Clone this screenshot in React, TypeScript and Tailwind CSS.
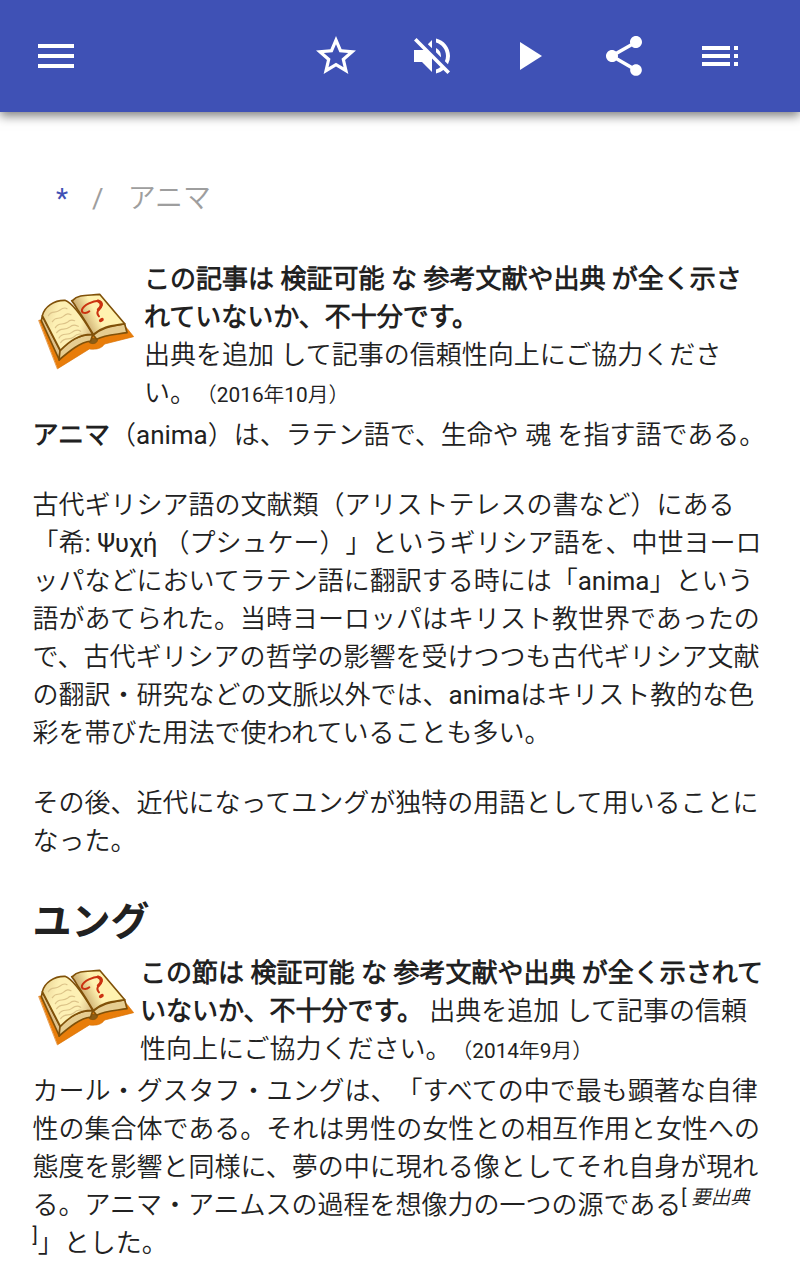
import type { ReactNode } from 'react';
import { MdMenu, MdPlayArrow, MdShare, MdStarBorder, MdToc, MdVolumeOff } from 'react-icons/md';

const actions = [
    { label: 'お気に入り', Icon: MdStarBorder },
    { label: 'ミュート', Icon: MdVolumeOff },
    { label: '再生', Icon: MdPlayArrow },
    { label: '共有', Icon: MdShare },
    { label: '目次', Icon: MdToc },
];

function BookIcon({ className }: { className: string }) {
    return (
        <svg viewBox="0 0 330 300" className={`h-[100px] w-[110px] shrink-0 ${className}`} fill="none" strokeLinejoin="round" strokeLinecap="round">
            <defs>
                <linearGradient id="leftPage" x1="40" y1="110" x2="185" y2="150" gradientUnits="userSpaceOnUse">
                    <stop offset="0" stopColor="#ecd89a" />
                    <stop offset="0.25" stopColor="#fdf0b4" />
                    <stop offset="0.75" stopColor="#fdf0b4" />
                    <stop offset="1" stopColor="#dcc088" />
                </linearGradient>
                <linearGradient id="rightPage" x1="156" y1="120" x2="198" y2="98" gradientUnits="userSpaceOnUse">
                    <stop offset="0" stopColor="#c9a86c" />
                    <stop offset="1" stopColor="#fff2b0" />
                </linearGradient>
            </defs>

            {/* Couverture */}
            <path d="M27 121L38 119L88 220L140 175L190 155L284 140L291 145L311 170L224 192C213 206 201 209 178 207L83 266Z" fill="#e87d0a" stroke="#d97306" strokeWidth="2" />
            <path d="M178 180C187 172 201 174 203 180C201 191 188 194 178 188Z" fill="#8b5d16" stroke="#805109" strokeWidth="2" />

            {/* Tranche */}
            <path d="M37 108L34 122L88 240L90 211Z" fill="#dfc28b" stroke="#805109" strokeWidth="5" />
            <path d="M90 211C119 181 147 162 188 164L182 183C150 187 120 212 87 240Z" fill="#e6cd91" stroke="#805109" strokeWidth="5" />
            <path d="M190 165C220 139 251 139 284 131L291 158C256 164 225 164 200 178Z" fill="#e6cd91" stroke="#805109" strokeWidth="5" />

            {/* Pages */}
            <path d="M37 107C43 81 72 60 105 61C126 68 157 111 188 163C148 162 119 183 91 211Z" fill="url(#leftPage)" stroke="#805109" strokeWidth="5" />
            <path d="M128 61C145 42 177 47 209 43L284 131C250 137 219 137 190 163C177 142 161 115 144 91C138 80 132 70 125 62Z" fill="url(#rightPage)" stroke="#805109" strokeWidth="5" />
            <path d="M55 107C65 89 75 102 89 91C99 83 104 81 111 86M67 125C78 107 86 121 100 109C111 99 116 101 123 104M76 143C87 124 98 138 112 127C120 118 127 119 134 122M80 158C92 140 104 153 118 142C130 132 136 135 145 139M87 174C98 155 111 169 126 157C138 148 145 149 152 154M92 188C105 168 116 183 131 171C139 163 146 160 155 163" stroke="#dcc389" strokeWidth="3.5" />

            {/* Point d'interrogation */}
            <path d="M178 94C168 102 153 100 156 89C161 74 190 63 206 62C222 68 215 80 207 88C200 95 202 103 207 109" stroke="#cb3210" strokeWidth="6" />
            <path d="M204 63C219 70 214 80 205 89" stroke="#cb3210" strokeWidth="9" />
            <ellipse cx="214" cy="120" rx="8" ry="5.5" transform="rotate(-30 214 120)" fill="#cb3210" />
        </svg>
    );
}

function Notice({ children, iconClass, className }: { children: ReactNode; iconClass: string; className: string }) {
    return (
        <div className="-ml-[2.5px] flex items-start">
            <BookIcon className={iconClass} />
            <p className={className}>{children}</p>
        </div>
    );
}

export default function App() {
    return (
        <div
            className="h-[1280px] w-[800px] overflow-hidden bg-white font-[Roboto,'Noto_Sans_CJK_JP_DemiLight','Noto_Sans_CJK_JP',sans-serif] text-[#212121] [text-spacing-trim:space-all]"
            lang="ja"
        >
            <header className="flex h-28 items-center justify-between bg-[#3f51b5] pr-14 pl-8 text-white shadow-[0_4px_10px_rgba(0,0,0,0.5)]">
                <button type="button" aria-label="メニュー">
                    <MdMenu className="size-12" />
                </button>
                <div className="flex gap-12">
                    {actions.map(({ label, Icon }) => (
                        <button key={label} type="button" aria-label={label}>
                            <Icon className="size-12" />
                        </button>
                    ))}
                </div>
            </header>

            <nav className="flex h-[148px] items-center gap-6 pt-[25px] pl-14 text-[28px] text-[#9e9e9e]">
                <a className="text-[#3f51b5]">*</a>
                <span>/</span>
                <span>アニマ</span>
            </nav>

            <main className="pl-[32.5px] text-[26px] leading-[38px] whitespace-nowrap">
                <Notice iconClass="mt-5" className="pl-1">
                    <b>この記事は 検証可能 な 参考文献や出典 が全く示さ<br />れていないか、不十分です。</b><br />
                    出典を追加 して記事の信頼性向上にご協力くださ<br />
                    い。<span className="text-[20.8px] leading-none">（2016年10月）</span>
                </Notice>
                <p className="mt-1">
                    <b>アニマ</b>（anima）は、ラテン語で、生命や 魂 を指す語である。
                </p>
                <p className="mt-8">
                    古代ギリシア語の文献類（アリストテレスの書など）にある<br />
                    「希: <span className="tracking-[-0.4px]">Ψυχή</span> （プシュケー）」というギリシア語を、中世ヨーロ<br />
                    ッパなどにおいてラテン語に翻訳する時には「anima」という<br />
                    語があてられた。当時ヨーロッパはキリスト教世界であったの<br />
                    で、古代ギリシアの哲学の影響を受けつつも古代ギリシア文献<br />
                    の翻訳・研究などの文脈以外では、animaはキリスト教的な色<br />
                    彩を帯びた用法で使われていることも多い。
                </p>
                <p className="mt-8">
                    その後、近代になってユングが独特の用語として用いることに<br />
                    なった。
                </p>

                <h2 className="mt-[34px] mb-1 font-[Roboto,'Noto_Sans_CJK_JP',sans-serif] text-[39px] leading-[56px] font-bold">ユング</h2>
                <Notice iconClass="mt-0.5" className="">
                    <b>この節は 検証可能 な 参考文献や出典 が全く示されて<br />いないか、不十分です。</b> 出典を追加 して記事の信頼<br />
                    性向上にご協力ください。<span className="text-[20.8px] leading-none">（2014年9月）</span>
                </Notice>
                <p className="mt-1">
                    カール・グスタフ・ユングは、「すべての中で最も顕著な自律<br />
                    性の集合体である。それは男性の女性との相互作用と女性への<br />
                    態度を影響と同様に、夢の中に現れる像としてそれ自身が現れ<br />
                    る。アニマ・アニムスの過程を想像力の一つの源である<sup className="text-[19.5px] leading-none">[ <i>要出典</i></sup><br />
                    <sup className="text-[19.5px] leading-none">]</sup>」とした。
                </p>
            </main>
        </div>
    );
}
